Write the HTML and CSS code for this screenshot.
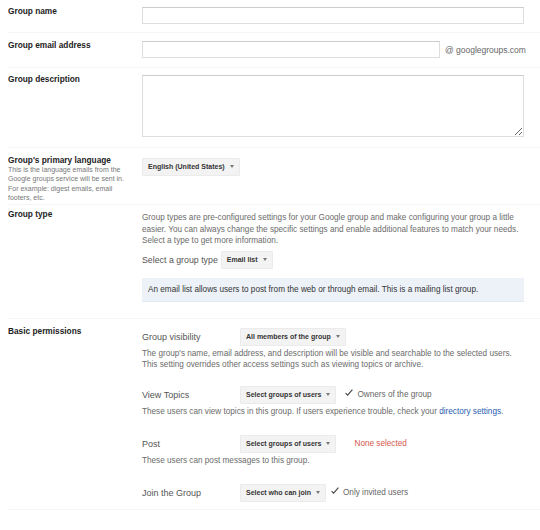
FILE: index.html
```html
<!DOCTYPE html>
<html>
<head>
<meta charset="utf-8">
<link rel="stylesheet" href="styles.css">
</head>
<body>
<div class="form">
  <div class="row row-name">
    <div class="label"><div class="title">Group name</div></div>
    <div class="field"><input class="text-input" type="text"></div>
  </div>

  <div class="row row-email">
    <div class="label"><div class="title">Group email address</div></div>
    <div class="field email-field">
      <input class="text-input email-input" type="text">
      <span class="domain">@ googlegroups.com</span>
    </div>
  </div>

  <div class="row row-desc">
    <div class="label"><div class="title">Group description</div></div>
    <div class="field"><textarea class="text-area"></textarea></div>
  </div>

  <div class="row row-lang">
    <div class="label">
      <div class="title">Group's primary language</div>
      <div class="help">This is the language emails from the<br>Google groups service will be sent in.<br>For example: digest emails, email<br>footers, etc.</div>
    </div>
    <div class="field lang-field"><span class="dropdown">English (United States)<i class="caret"></i></span></div>
  </div>

  <div class="row row-type">
    <div class="label"><div class="title">Group type</div></div>
    <div class="field type-field">
      <div class="desc type-desc">Group types are pre-configured settings for your Google group and make configuring your group a little<br>easier. You can always change the specific settings and enable additional features to match your needs.<br>Select a type to get more information.</div>
      <div class="type-select">
        <span class="sub-label">Select a group type</span>
        <span class="dropdown">Email list<i class="caret"></i></span>
      </div>
      <div class="info-box">An email list allows users to post from the web or through email. This is a mailing list group.</div>
    </div>
  </div>

  <div class="row row-perm">
    <div class="label"><div class="title">Basic permissions</div></div>
    <div class="field perm-field">
      <div class="perm">
        <div class="perm-line">
          <span class="perm-name">Group visibility</span>
          <span class="dropdown">All members of the group<i class="caret"></i></span>
        </div>
        <div class="desc perm-desc">The group's name, email address, and description will be visible and searchable to the selected users.<br>This setting overrides other access settings such as viewing topics or archive.</div>
      </div>

      <div class="perm perm-gap">
        <div class="perm-line">
          <span class="perm-name">View Topics</span>
          <span class="dropdown">Select groups of users<i class="caret"></i></span>
          <span class="status">
            <svg class="check" viewBox="0 0 8 7" width="8" height="7"><path d="M0.6 4.2 L2.6 6.2 L7.4 0.6" fill="none" stroke="#444" stroke-width="1.1"/></svg>
            <span class="status-text">Owners of the group</span>
          </span>
        </div>
        <div class="desc perm-desc">These users can view topics in this group. If users experience trouble, check your <a class="link" href="#">directory settings</a>.</div>
      </div>

      <div class="perm perm-gap2">
        <div class="perm-line">
          <span class="perm-name">Post</span>
          <span class="dropdown">Select groups of users<i class="caret"></i></span>
          <span class="status none">None selected</span>
        </div>
        <div class="desc perm-desc">These users can post messages to this group.</div>
      </div>

      <div class="perm perm-gap3">
        <div class="perm-line">
          <span class="perm-name">Join the Group</span>
          <span class="dropdown">Select who can join<i class="caret"></i></span>
          <span class="status join-status">
            <svg class="check" viewBox="0 0 8 7" width="8" height="7"><path d="M0.6 4.2 L2.6 6.2 L7.4 0.6" fill="none" stroke="#444" stroke-width="1.1"/></svg>
            <span class="status-text">Only invited users</span>
          </span>
        </div>
      </div>
    </div>
  </div>
</div>
</body>
</html>
```

FILE: styles.css
```css
html, body {
  margin: 0;
  padding: 0;
  background: #fff;
}

body {
  font-family: "Liberation Sans", Arial, sans-serif;
  color: #222;
}

.form {
  padding-left: 8px;
}

.row {
  display: flex;
  align-items: flex-start;
  padding-right: 16px;
  border-bottom: 1px solid #f5f5f5;
}

.label {
  width: 134px;
  flex: none;
}

.title {
  font-size: 8.3px;
  font-weight: bold;
  line-height: 10px;
  color: #222;
}

.help {
  font-size: 7px;
  line-height: 9.3px;
  color: #777;
}

.field {
  flex: 1;
  min-width: 0;
  margin-top: 1px;
}

.row-name { padding-top: 6px; padding-bottom: 8px; }
.row-email { padding-top: 7px; padding-bottom: 9px; }
.row-desc { padding-top: 6px; padding-bottom: 10px; }
.row-lang { padding-top: 7px; padding-bottom: 2px; }
.row-type { padding-top: 4px; padding-bottom: 16px; }
.row-perm { padding-top: 7px; padding-bottom: 7px; }

.lang-field {
  margin-top: 0;
}

.text-input {
  display: block;
  box-sizing: border-box;
  width: 100%;
  height: 17px;
  margin: 0;
  border: 1px solid #dedede;
  border-top-color: #cccccc;
  background: #fff;
  padding: 0 4px;
  font: inherit;
}

.email-field {
  display: flex;
  align-items: center;
}

.email-input {
  width: 298px;
  flex: none;
}

.domain {
  margin-left: 5px;
  font-size: 8.5px;
  color: #666;
  white-space: nowrap;
}

.text-area {
  display: block;
  box-sizing: border-box;
  width: 100%;
  height: 62px;
  margin: 0;
  border: 1px solid #dedede;
  border-top-color: #cccccc;
  background: #fff;
  font: inherit;
}

.dropdown {
  display: inline-flex;
  align-items: center;
  box-sizing: border-box;
  height: 18px;
  padding: 0 5px 0 5px;
  background: #f3f3f3;
  border: 1px solid #ebebeb;
  border-radius: 1px;
  font-size: 7px;
  font-weight: bold;
  color: #333;
  white-space: nowrap;
  flex: none;
}

.caret {
  display: inline-block;
  width: 0;
  height: 0;
  margin-left: 5px;
  border-left: 2.5px solid transparent;
  border-right: 2.5px solid transparent;
  border-top: 3px solid #777;
}

.desc {
  font-size: 8.2px;
  color: #6b6b6b;
  white-space: nowrap;
}

.type-field {
  margin-top: 3px;
}

.type-desc {
  line-height: 11.5px;
}

.type-select {
  display: flex;
  align-items: center;
  margin-top: 4px;
}

.sub-label {
  font-size: 8.8px;
  color: #555;
  margin-right: 3px;
}

.info-box {
  box-sizing: border-box;
  height: 24px;
  margin-top: 9px;
  padding-left: 6px;
  display: flex;
  align-items: center;
  background: #edf2f9;
  border-bottom: 1px solid #e3e9f1;
  font-size: 8.2px;
  color: #333;
}

.perm-field {
  margin-top: 2px;
}

.perm-line {
  display: flex;
  align-items: center;
}

.perm-name {
  width: 98px;
  flex: none;
  font-size: 9px;
  color: #555;
}

.perm-desc {
  margin-top: 2px;
  line-height: 11px;
}

.perm-gap { margin-top: 16px; }
.perm-gap2 { margin-top: 18px; }
.perm-gap3 { margin-top: 18px; }

.status {
  display: inline-flex;
  align-items: center;
  margin-left: 9px;
  font-size: 8.2px;
  color: #666;
}

.join-status {
  margin-left: 5px;
}

.check {
  display: block;
  margin-right: 4px;
  margin-top: -4px;
}

.none {
  margin-left: 18px;
  color: #d4564b;
}

.link {
  color: #2a5db0;
  text-decoration: none;
}
```
